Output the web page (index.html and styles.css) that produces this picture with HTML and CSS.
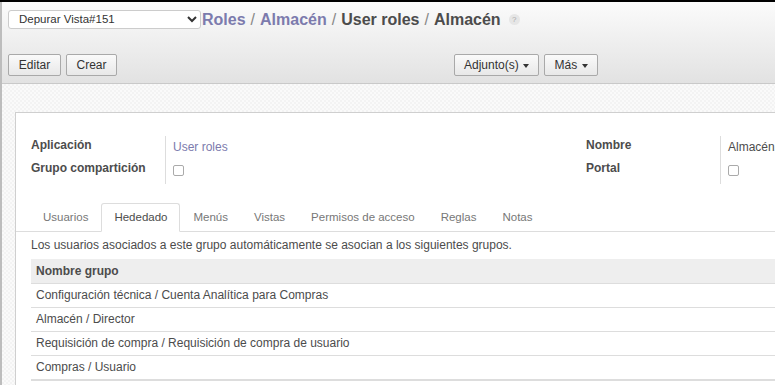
FILE: index.html
```html
<!DOCTYPE html>
<html lang="es">
<head>
  <meta charset="UTF-8" />
  <title>User roles / Almacén</title>
  <link rel="stylesheet" href="styles.css">
</head>
<body>
  <div class="app">
    <div class="control-panel">
      <div class="cp-top">
        <select class="debug-select">
          <option>Depurar Vista#151</option>
        </select>
        <div class="breadcrumb">
          <a class="crumb">Roles</a>
          <span class="sep">/</span>
          <a class="crumb">Almacén</a>
          <span class="sep">/</span>
          <span class="current">User roles</span>
          <span class="sep">/</span>
          <span class="current">Almacén</span>
          <span class="help">?</span>
        </div>
      </div>
      <div class="cp-bottom">
        <div class="btn-group">
          <button class="btn btn-edit">Editar</button>
          <button class="btn btn-create">Crear</button>
        </div>
        <div class="btn-group sidebar">
          <button class="btn btn-attach">Adjunto(s) <span class="caret"></span></button>
          <button class="btn btn-more">Más <span class="caret"></span></button>
        </div>
      </div>
    </div>

    <div class="content">
      <div class="sheet">
        <div class="fields">
          <div class="group">
            <div class="labels">
              <div class="label">Aplicación</div>
              <div class="label">Grupo compartición</div>
            </div>
            <div class="values">
              <div class="value"><a class="link">User roles</a></div>
              <div class="value"><span class="checkbox"></span></div>
            </div>
          </div>
          <div class="group right">
            <div class="labels">
              <div class="label">Nombre</div>
              <div class="label">Portal</div>
            </div>
            <div class="values">
              <div class="value plain">Almacén</div>
              <div class="value"><span class="checkbox"></span></div>
            </div>
          </div>
        </div>

        <ul class="tabs">
          <li>Usuarios</li>
          <li class="active">Hededado</li>
          <li>Menús</li>
          <li>Vistas</li>
          <li>Permisos de acceso</li>
          <li>Reglas</li>
          <li>Notas</li>
        </ul>

        <p class="hint">Los usuarios asociados a este grupo automáticamente se asocian a los siguientes grupos.</p>

        <table class="list">
          <thead>
            <tr><th>Nombre grupo</th></tr>
          </thead>
          <tbody>
            <tr><td>Configuración técnica / Cuenta Analítica para Compras</td></tr>
            <tr><td>Almacén / Director</td></tr>
            <tr><td>Requisición de compra / Requisición de compra de usuario</td></tr>
            <tr><td>Compras / Usuario</td></tr>
          </tbody>
        </table>
      </div>
    </div>
  </div>
</body>
</html>
```

FILE: styles.css
```css
html, body {
  margin: 0;
  padding: 0;
  height: 100%;
  overflow: hidden;
}
body {
  font-family: "Liberation Sans", Arial, sans-serif;
  font-size: 12px;
  color: #4c4c4c;
  background: #000;
}
.app {
  margin-top: 2px;
  height: 383px;
  border-left: 2px solid #bdbdbd;
  background: #f7f7f7;
  display: flex;
  flex-direction: column;
}

/* control panel */
.control-panel {
  height: 81px;
  background: linear-gradient(#fbfbfb, #e2e2e2);
  border-bottom: 1px solid #c9c9c9;
  padding: 0 0 0 6px;
}
.cp-top {
  display: flex;
  align-items: center;
  height: 32px;
}
.debug-select {
  width: 193px;
  height: 19px;
  margin-top: 2px;
  font-family: "Liberation Sans", Arial, sans-serif;
  font-size: 11.5px;
  color: #333;
  background: #fff;
  border: 1px solid #ccc;
  border-radius: 3px;
  padding: 0 6px;
}
.breadcrumb {
  font-size: 16px;
  font-weight: bold;
  display: flex;
  align-items: center;
  gap: 5px;
  margin-left: 1px;
  margin-top: 3px;
}
.crumb { color: #7c7bad; }
.sep { color: #888; font-weight: normal; }
.current { color: #4c4c4c; }
.help {
  width: 11px;
  height: 11px;
  border-radius: 50%;
  background: #e6e6e6;
  color: #aaa;
  font-size: 8px;
  font-weight: normal;
  display: flex;
  align-items: center;
  justify-content: center;
  margin-left: 3px;
}
.cp-bottom {
  display: flex;
  margin-top: 20px;
}
.btn-group {
  display: flex;
  gap: 5px;
}
.btn-group.sidebar {
  margin-left: 337px;
}
.btn {
  height: 22px;
  padding: 0;
  font-family: "Liberation Sans", Arial, sans-serif;
  font-size: 12px;
  color: #333;
  background: linear-gradient(#fafafa, #e8e8e8);
  border: 1px solid #a9a9a9;
  border-radius: 2px;
}
.btn-edit { width: 53px; }
.btn-create { width: 51px; }
.btn-attach { width: 85px; }
.btn-more { width: 54px; }
.caret {
  display: inline-block;
  width: 0;
  height: 0;
  border-left: 3px solid transparent;
  border-right: 3px solid transparent;
  border-top: 4px solid #333;
  vertical-align: middle;
  margin-left: 1px;
}

/* content */
.content {
  flex: 1;
  padding: 28px 0 0 13px;
  background: repeating-conic-gradient(#f3f3f3 0 25%, #fafafa 0 50%) 0 0 / 4px 4px;
}
.sheet {
  height: 100%;
  background: #fff;
  border-left: 1px solid #cfcfcf;
  border-top: 1px solid #cfcfcf;
  padding: 23px 0 0 15px;
  box-sizing: border-box;
}
.fields {
  display: flex;
}
.group {
  display: flex;
  width: 555px;
}
.group.right {
  width: auto;
}
.labels {
  width: 134px;
  padding-top: 2px;
}
.label {
  font-weight: bold;
  color: #4c4c4c;
  height: 23px;
}
.values {
  border-left: 1px solid #ddd;
  padding-left: 7px;
  height: 48px;
}
.value {
  height: 23px;
  padding-top: 4px;
  box-sizing: border-box;
}
.value.plain { color: #4c4c4c; }
.link { color: #7c7bad; }
.checkbox {
  display: inline-block;
  width: 9px;
  height: 9px;
  border: 1px solid #aaa;
  border-radius: 2px;
  margin-top: 2px;
}

/* tabs */
.tabs {
  list-style: none;
  margin: 19px 0 0 -15px;
  padding: 0 0 0 14px;
  display: flex;
  border-bottom: 1px solid #ddd;
  color: #777;
  font-size: 11.5px;
}
.tabs li {
  padding: 7px 12px 6px;
  border: 1px solid transparent;
  border-bottom: none;
  margin-bottom: -1px;
  height: 14px;
}
.tabs li.active {
  color: #4c4c4c;
  background: #fff;
  border-color: #ddd;
  border-bottom: 1px solid #fff;
  border-radius: 3px 3px 0 0;
}
.hint {
  margin: 6px 0 7px 0;
  color: #4c4c4c;
}

/* list */
.list {
  width: 100%;
  border-collapse: collapse;
}
.list th {
  text-align: left;
  font-weight: bold;
  background: #eee;
  border-bottom: 1px solid #ddd;
  height: 24px;
  padding: 0 5px;
}
.list td {
  height: 22px;
  padding: 0 5px 1px;
  border-bottom: 1px solid #ddd;
}
.list tbody tr:last-child td {
  border-bottom: 2px solid #ddd;
}
```
